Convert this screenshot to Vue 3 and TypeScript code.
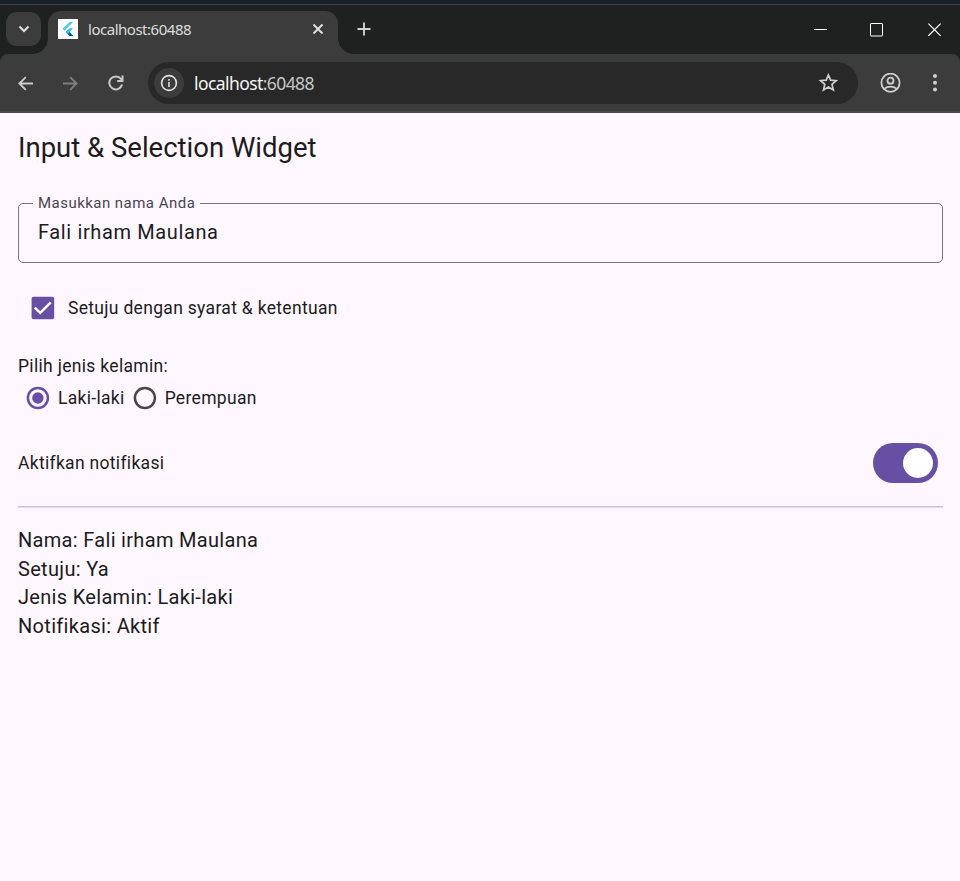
<script setup lang="ts">
import { computed, ref } from 'vue'

const address = 'localhost:60488'
const [host, port] = address.split(':')

const name = ref('Fali irham Maulana')
const agreed = ref(true)
const gender = ref('Laki-laki')
const notify = ref(true)
const genders = ['Laki-laki', 'Perempuan']

const summary = computed(() => [
  `Nama: ${name.value}`,
  `Setuju: ${agreed.value ? 'Ya' : 'Tidak'}`,
  `Jenis Kelamin: ${gender.value}`,
  `Notifikasi: ${notify.value ? 'Aktif' : 'Nonaktif'}`,
])
</script>

<template>
  <div class="window">
    <div class="desktop-edge"></div>
    <header class="tabstrip">
      <button class="tab-search" aria-label="Tabs">
        <svg width="12" height="8" viewBox="0 0 12 8"><path d="M1.500 1.500 6 6l4.500-4.500" fill="none" stroke="#e3e3e3" stroke-width="2" /></svg>
      </button>
      <div class="tab">
        <svg class="favicon" width="20" height="20" viewBox="0 0 20 20">
          <rect width="20" height="20" fill="#fff" />
          <path d="M4.500 9.700 11.500 3h3.700L6.400 11.700z" fill="#54c5f8" />
          <path d="M11.400 9.300h3.800l-3.700 3.600 3.700 4h-3.800l-3.800-4z" fill="#40bdf5" />
          <path d="m9.700 14.900 1.900-2 3.600 4h-3.700z" fill="#01579b" />
          <path d="m7.700 12.900 1.900-1.900 2 1.900-1.900 2z" fill="#29b6f6" />
        </svg>
        <span class="tab-title">{{ address }}</span>
        <svg class="tab-close" width="12" height="12" viewBox="0 0 12 12"><path d="m1.500 1.500 9 9M10.500 1.500l-9 9" stroke="#e3e3e3" stroke-width="1.800" /></svg>
      </div>
      <svg class="new-tab" width="14" height="14" viewBox="0 0 14 14"><path d="M7 .5v13M.5 7h13" stroke="#d2d2d2" stroke-width="1.900" /></svg>
      <div class="controls">
        <svg width="14" height="14" viewBox="0 0 14 14"><path d="M0 6.500h13" stroke="#fff" /></svg>
        <svg class="maximize" width="14" height="14" viewBox="0 0 14 14"><rect x=".5" y=".5" width="12" height="12.500" rx=".5" fill="none" stroke="#fff" /></svg>
        <svg width="14" height="14" viewBox="0 0 14 14"><path d="m.4.600 12.200 12.200M12.600.600.4 12.800" stroke="#fff" stroke-width="1.200" /></svg>
      </div>
    </header>

    <nav class="toolbar">
      <svg class="back" width="15" height="15" viewBox="0 0 16 16"><path d="M16 8H2M8.300 1.200 1.500 8l6.800 6.800" fill="none" stroke="#c9c9c9" stroke-width="2" /></svg>
      <svg class="forward" width="15" height="15" viewBox="0 0 16 16"><path d="M0 8H14M7.700 1.200 14.500 8l-6.800 6.800" fill="none" stroke="#7e7e7e" stroke-width="2" /></svg>
      <svg class="reload" width="16" height="16" viewBox="0 0 16 16"><path d="M14.100 9.500A6.500 6.500 0 1 1 13 4L14.300 5.600M14.500.5v5.500H9.200" fill="none" stroke="#c9c9c9" stroke-width="2" /></svg>
      <div class="omnibox">
        <span class="site-info">
          <svg width="18" height="18" viewBox="0 0 18 18"><circle cx="9" cy="9" r="7.400" fill="none" stroke="#e3e3e3" stroke-width="1.600" /><path d="M9 8v5M9 5v1.700" stroke="#e3e3e3" stroke-width="1.600" /></svg>
        </span>
        <span class="url">{{ host }}<span class="port">:{{ port }}</span></span>
        <svg class="star" width="20" height="20" viewBox="0 0 20 20"><path d="m10.400 2 2.200 5.200 5.700.5-4.300 3.700 1.300 5.600-4.900-3-4.900 3 1.300-5.600L2.500 7.700l5.700-.5z" fill="none" stroke="#cfcfcf" stroke-width="1.700" /></svg>
      </div>
      <svg class="profile" width="21" height="20" viewBox="0 0 21 20"><g fill="none" stroke="#cfcfcf" stroke-width="1.800"><circle cx="10.500" cy="9.700" r="9.100" /><circle cx="10.500" cy="7.700" r="3" /><path d="M4.200 15.900C7.700 12.900 13.300 12.900 16.800 15.900" /></g></svg>
      <svg class="menu" width="4" height="18" viewBox="0 0 4 18"><g fill="#cfcfcf"><circle cx="2" cy="2" r="2" /><circle cx="2" cy="8.800" r="2" /><circle cx="2" cy="15.600" r="2" /></g></svg>
    </nav>

    <main class="page">
      <h1>Input &amp; Selection Widget</h1>

      <fieldset class="field">
        <legend>Masukkan nama Anda</legend>
        <input v-model="name" type="text" aria-label="Masukkan nama Anda" spellcheck="false" />
      </fieldset>

      <div class="agree" @click="agreed = !agreed">
        <svg width="24" height="24" viewBox="0 0 24 24">
          <rect x=".6" y=".7" width="22.600" height="22.600" rx="2" :fill="agreed ? '#6750a4' : 'none'" stroke="none" />
          <path v-if="agreed" d="m3.800 11.600 5.400 5.200L19.800 6.300" fill="none" stroke="#fff" stroke-width="2.500" />
        </svg>
        <span>Setuju dengan syarat &amp; ketentuan</span>
      </div>

      <div class="group-label">Pilih jenis kelamin:</div>
      <div class="radios">
        <div v-for="g in genders" :key="g" class="option" @click="gender = g">
          <svg class="radio" :class="{ on: gender === g }" width="24" height="24" viewBox="0 0 24 24">
            <circle class="ring" cx="11.900" cy="12" r="10" />
            <circle v-if="gender === g" class="dot" cx="11.900" cy="12" r="5.700" />
          </svg>
          <span>{{ g }}</span>
        </div>
      </div>

      <div class="notify">
        <span>Aktifkan notifikasi</span>
        <button class="switch" :class="{ on: notify }" aria-label="Notifikasi" @click="notify = !notify"><i></i></button>
      </div>

      <hr />

      <div class="summary">
        <div v-for="line in summary" :key="line">{{ line }}</div>
      </div>
    </main>
  </div>
</template>

<style>
body {
  margin: 0;
  background: #fef7ff;
}
</style>

<style scoped>
* {
  box-sizing: border-box;
}
svg {
  display: block;
  flex: none;
}
button {
  border: 0;
  padding: 0;
}
.window {
  display: flex;
  flex-direction: column;
  height: 881px;
  overflow: hidden;
  background: #1f2120;
}
.desktop-edge {
  height: 5px;
  flex: none;
  background: #181f2b;
  border-bottom: 1px solid #3b4046;
}
.tabstrip {
  display: flex;
  height: 49px;
  flex: none;
  padding: 6px 18px 0 6px;
  font-family: "Noto Sans", "Open Sans", sans-serif;
}
.tab-search {
  display: grid;
  place-items: center;
  width: 35px;
  height: 34px;
  margin-top: 1px;
  border-radius: 11px;
  background: #3c3c3c;
}
.tab {
  position: relative;
  display: flex;
  align-items: center;
  width: 290px;
  height: 43px;
  margin-left: 7px;
  padding: 0 14px 7px 10px;
  border-radius: 13px 13px 0 0;
  background: #3c3c3c;
}
.tab::before,
.tab::after {
  content: "";
  position: absolute;
  bottom: 0;
  width: 15px;
  height: 15px;
}
.tab::before {
  left: -15px;
  background: radial-gradient(circle at 0 0, transparent 14.500px, #3c3c3c 15px);
}
.tab::after {
  right: -15px;
  background: radial-gradient(circle at 100% 0, transparent 14.500px, #3c3c3c 15px);
}
.tab-title {
  margin-left: 10px;
  flex: 1;
  font-size: 15px;
  letter-spacing: -0.480px;
  line-height: 20px;
  color: #dcdcdc;
  white-space: nowrap;
}
.new-tab {
  margin: 11px 0 0 19px;
}
.controls {
  display: flex;
  gap: 43px;
  margin: 12px 0 0 auto;
}
.controls .maximize {
  margin: 0 1px 0 -1px;
}
.toolbar {
  display: flex;
  align-items: center;
  height: 59px;
  flex: none;
  padding: 1px 22px 0 18px;
  border-bottom: 2px solid #494949;
  border-radius: 8px 8px 0 0;
  background: #3c3c3c;
}
.forward {
  margin-left: 30px;
}
.reload {
  margin-left: 30px;
}
.omnibox {
  display: flex;
  align-items: center;
  width: 710px;
  height: 42px;
  margin-left: 24px;
  padding: 0 20px 0 6px;
  border-radius: 21px;
  background: #282828;
}
.site-info {
  display: grid;
  place-items: center;
  width: 30px;
  height: 30px;
  border-radius: 50%;
  background: #3c3c3c;
}
.url {
  flex: 1;
  margin-left: 10px;
  font: 17.500px/24px "Noto Sans", "Open Sans", sans-serif;
  letter-spacing: -0.580px;
  color: #f4f4f4;
}
.port {
  color: #c7c7c7;
}
.profile {
  margin-left: 22px;
}
.menu {
  margin-left: auto;
  margin-right: 1px;
}
.page {
  flex: 1;
  padding: 17px 17px 0 18px;
  background: #fef7ff;
  color: #1d1b20;
  font: 17.500px/25px Roboto, sans-serif;
  letter-spacing: 0.3125px;
}
h1 {
  margin: 0;
  font-size: 27.500px;
  font-weight: 400;
  line-height: 35px;
  letter-spacing: 0;
}
.field {
  height: 70px;
  margin: 28px 0 0;
  padding: 4px 19px 0;
  border: 1px solid #79747e;
  border-radius: 5px;
}
legend {
  margin-left: -5px;
  padding: 0 5px;
  font-size: 15px;
  line-height: 20px;
  letter-spacing: 0.470px;
  color: #49454f;
}
.field input {
  display: block;
  width: 100%;
  height: 30px;
  padding: 0;
  border: 0;
  outline: 0;
  background: transparent;
  color: #1d1b20;
  font: 20px/30px Roboto, sans-serif;
  letter-spacing: 0.625px;
}
.agree {
  display: flex;
  align-items: center;
  gap: 13px;
  height: 25px;
  margin: 33px 0 0 13px;
}
.agree svg {
  margin-bottom: 2px;
}
.group-label {
  margin-top: 33px;
}
.radios {
  display: flex;
  gap: 8px;
  margin: 7px 0 0 8px;
}
.option {
  display: flex;
  align-items: flex-start;
  gap: 8px;
}
.ring {
  fill: none;
  stroke: #49454f;
  stroke-width: 2.500px;
}
.radio.on .ring {
  stroke: #6750a4;
}
.dot {
  fill: #6750a4;
}
.notify {
  display: flex;
  align-items: center;
  justify-content: space-between;
  margin-top: 32px;
  padding-right: 5px;
}
.switch {
  display: flex;
  align-items: center;
  width: 65px;
  height: 40px;
  padding: 5px;
  border-radius: 20px;
  background: #79747e;
}
.switch.on {
  justify-content: flex-end;
  background: #6750a4;
}
.switch i {
  width: 30px;
  height: 30px;
  border-radius: 50%;
  background: #fff;
}
hr {
  height: 2px;
  margin: 23px 0 0;
  border: 0;
  background: linear-gradient(#cac4d0 50%, #e4deea 50%);
}
.summary {
  margin-top: 18px;
  font-size: 20px;
  line-height: 28.600px;
  letter-spacing: 0.3125px;
}
</style>
